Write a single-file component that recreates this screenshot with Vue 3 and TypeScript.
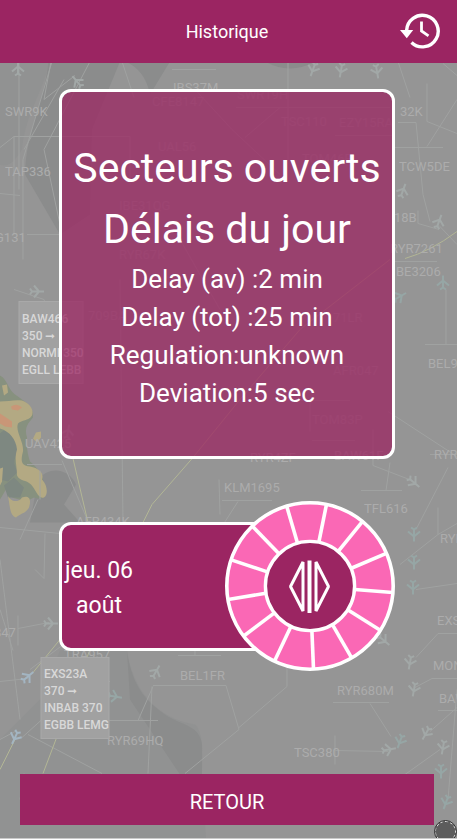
<script setup lang="ts">
interface Stat { label: string; value: string }
interface Tag { x: number; y: number; text: string; faint?: boolean }
interface Plane { x: number; y: number; turn: number; tone?: string }

const stats: Stat[] = [
  { label: 'Delay (av) :', value: '2 min' },
  { label: 'Delay (tot) :', value: '25 min' },
  { label: 'Regulation:', value: 'unknown' },
  { label: 'Deviation:', value: '5 sec' },
]

// Thirteen equal segments between the hub and the rim of the wheel
const spokes = Array.from({ length: 13 }, (_, i) => {
  const a = ((4.5 + (i * 360) / 13) * Math.PI) / 180
  return {
    x1: 85 + 45 * Math.cos(a),
    y1: 85 + 45 * Math.sin(a),
    x2: 85 + 83 * Math.cos(a),
    y2: 85 + 83 * Math.sin(a),
  }
})

const tags: Tag[] = [
  { x: 5, y: 116, text: 'SWR9K' },
  { x: 5, y: 176, text: 'TAP336' },
  { x: -5, y: 242, text: 'G131' },
  { x: 173, y: 92, text: 'IBS37M' },
  { x: 152, y: 106, text: 'CFE8147', faint: true },
  { x: 237, y: 99, text: 'SWR19H', faint: true },
  { x: 281, y: 126, text: 'TSC110', faint: true },
  { x: 339, y: 127, text: 'EZY15RA', faint: true },
  { x: 158, y: 151, text: 'UAL56', faint: true },
  { x: 302, y: 163, text: 'TOM46E', faint: true },
  { x: 119, y: 210, text: 'IBE31QG', faint: true },
  { x: 119, y: 259, text: 'RYR67K', faint: true },
  { x: 400, y: 116, text: '32K' },
  { x: 399, y: 171, text: 'TCW5DE' },
  { x: 394, y: 222, text: '18B' },
  { x: 390, y: 253, text: 'RYR7261' },
  { x: 396, y: 276, text: 'BE3206' },
  { x: 333, y: 322, text: '71LR', faint: true },
  { x: 88, y: 320, text: '709BA', faint: true },
  { x: 428, y: 368, text: 'BEL95' },
  { x: 333, y: 375, text: 'AFR047', faint: true },
  { x: 312, y: 424, text: 'TOM83P', faint: true },
  { x: 434, y: 459, text: 'RYR9' },
  { x: 250, y: 462, text: 'RYR4ZF' },
  { x: 334, y: 460, text: 'BAW61F' },
  { x: 25, y: 448, text: 'UAV425' },
  { x: 224, y: 492, text: 'KLM1695' },
  { x: 364, y: 513, text: 'TFL616' },
  { x: 76, y: 526, text: 'AFR434K' },
  { x: 440, y: 543, text: 'RYR' },
  { x: -6, y: 637, text: '847' },
  { x: 437, y: 625, text: 'EXS' },
  { x: 64, y: 659, text: 'TRA957' },
  { x: 180, y: 680, text: 'BEL1FR' },
  { x: 337, y: 695, text: 'RYR680M' },
  { x: 433, y: 670, text: 'MON' },
  { x: 439, y: 703, text: 'BAW' },
  { x: 107, y: 745, text: 'RYR69HQ' },
  { x: 294, y: 757, text: 'TSC380' },
]

const planes: Plane[] = [
  { x: 18, y: 69, turn: 0 },
  { x: 77, y: 82, turn: -40 },
  { x: 313, y: 70, turn: 200 },
  { x: 341, y: 71, turn: 190 },
  { x: 377, y: 72, turn: 170 },
  { x: 403, y: 191, turn: 20 },
  { x: 439, y: 222, turn: 20 },
  { x: 443, y: 283, turn: 0, tone: 'teal' },
  { x: 400, y: 297, turn: 60, tone: 'teal' },
  { x: 37, y: 292, turn: 90 },
  { x: 68, y: 432, turn: 10 },
  { x: 414, y: 483, turn: 130 },
  { x: 414, y: 535, turn: 180, tone: 'teal' },
  { x: 414, y: 563, turn: 180, tone: 'teal' },
  { x: 413, y: 588, turn: 180, tone: 'teal' },
  { x: 384, y: 641, turn: 130 },
  { x: 410, y: 663, turn: 190 },
  { x: 414, y: 690, turn: 190 },
  { x: 156, y: 672, turn: 30 },
  { x: 51, y: 624, turn: 90 },
  { x: 28, y: 677, turn: 50, tone: 'blue' },
  { x: 15, y: 738, turn: 205, tone: 'blue' },
  { x: 115, y: 697, turn: 100, tone: 'teal' },
  { x: 389, y: 750, turn: 80 },
  { x: 400, y: 742, turn: 200, tone: 'teal' },
  { x: 426, y: 734, turn: 210 },
  { x: 443, y: 748, turn: 190 },
  { x: 441, y: 772, turn: 180, tone: 'teal' },
  { x: 446, y: 803, turn: 200, tone: 'teal' },
]
</script>

<template>
  <div class="screen">
    <svg class="map" viewBox="0 0 457 839" preserveAspectRatio="xMidYMid slice" aria-hidden="true">
      <g class="land">
        <path d="M48 62C46 100 26 130 25 175L60 235L90 215L92 130L120 62Z" />
        <path d="M125 62Q145 70 150 95L170 62ZM265 62Q290 76 315 62Z" />
        <path class="pale" d="M0 62H48C46 90 26 110 22 150Q10 170 0 165Z" />
        <path class="pale" d="M60 651H127C133 690 155 718 195 725C205 735 202 760 202 775L206 839H0V740L40 700Z" />
        <path d="M127 651C132 690 150 705 168 717C184 726 200 727 202 745V775H180L130 700Z" />
        <path d="M38 480C50 465 70 470 76 485L64 505L80 523H30Z" />
      </g>
      <g class="storm">
        <path class="green" d="M0 376C8 380 8 392 18 397C24 402 34 406 33 418C28 424 24 428 27 438C26 446 28 456 30 462C38 468 44 478 46 492C46 500 40 500 34 498L26 502L12 498L6 490L0 500Z" />
        <path class="gray" d="M0 434Q8 426 14 434Q20 444 16 456Q12 464 18 472L8 482L0 480ZM4 486L14 478L24 488L20 498L8 498Z" />
        <path class="gold" d="M0 402C8 402 14 400 22 401C30 404 34 410 32 416C28 422 22 420 18 424C15 432 24 442 23 452C21 460 20 466 30 467C40 469 44 474 42 480C48 486 48 496 44 498C38 500 36 490 31 485C26 480 20 482 17 476C17 466 14 460 17 450C16 440 10 432 0 429ZM8 496C10 502 18 504 22 498C28 496 32 498 29 508C26 514 20 514 16 518C10 516 10 508 8 496Z" />
        <path class="gold" d="M36 433L41 432L41 438L37 443L33 439ZM2 386L7 385L8 393L4 396ZM0 469L3 468L2 482L0 486Z" />
        <path class="orange" d="M11 407Q17 403 22 408L18 411L12 410ZM0 414L12 422V428L5 427L0 424Z" />
      </g>
      <g class="routes">
        <path d="M19 62V190M52 62L23 160V260M64 80L24 150M75 76L44 100L51 62M90 62L44 150L60 225M0 148L14 137H130V185M14 137V235M0 194L20 196M27 235H60M122 62L134 98M172 70H216M195 90L232 130L280 175M288 62V160M236 108H390M280 108L245 138M335 136H395M398 62L410 98M427 84V122L457 134M427 147L457 100M398 123H416L423 195L430 222M393 148H443M443 64L457 76M418 211V224L439 230M394 262H437M439 226L457 245M446 290V345M425 345H457M14 290L44 300L60 350M27 465H62M40 471V500M62 461L88 522M120 280L123 522M180 240L220 310M310 400V432M290 401H350M373 430V466L412 481M312 441H355M388 412L457 457M390 463L386 491M361 491H402M219 480L220 515M222 501H272M238 502L220 530M430 455H457M448 468L416 530M438 508V535M400 565L438 535L457 524M416 590L457 584M0 528L60 534M45 534L44 579L35 570M0 610L13 651M0 560L20 720M18 616V646M18 629L49 623M42 682H110M153 686H226L239 730L185 774M239 728L287 687V650M153 687L138 721H158M108 721H157M152 687L148 774M178 656H221M195 644V656M416 658L438 634H457M415 688L432 679H457M333 703H389M370 704L391 737M438 711H457M457 708L430 732M448 800L457 690M335 736V765M335 751L388 752M405 775L440 750M28 735L102 774M22 738L42 720M0 682L28 679M30 670L70 640M0 740L15 732M60 535L160 600M20 540L38 500M20 800L24 774" />
        <path class="yellow" d="M0 770L16 738M33 673L60 640M43 774L90 650M73 459L88 523M143 523L152 505L193 458L240 400L300 330L390 260M405 259Q430 252 457 232" />
      </g>
      <g class="planes">
        <g v-for="(p, i) in planes" :key="i" :class="p.tone" :transform="`translate(${p.x} ${p.y}) rotate(${p.turn})`">
          <path d="M0-7V6M0-2L-6 3M0-2L6 3M0 5L-3 7M0 5L3 7" />
        </g>
      </g>
      <g class="tags">
        <text v-for="(t, i) in tags" :key="i" :x="t.x" :y="t.y" :class="{ faint: t.faint }">{{ t.text }}</text>
      </g>
      <g class="plates">
        <rect x="19" y="302" width="64" height="82" />
        <text x="22" y="323">BAW466</text>
        <text x="22" y="340">350 ➞</text>
        <text x="22" y="357">NORMI 350</text>
        <text x="22" y="374">EGLL LEBB</text>
        <rect x="41" y="658" width="68" height="81" />
        <text x="44" y="678">EXS23A</text>
        <text x="44" y="695">370 ➞</text>
        <text x="44" y="712">INBAB 370</text>
        <text x="44" y="729">EGBB LEMG</text>
      </g>
    </svg>

    <header class="bar">
      <h1>Historique</h1>
      <button class="history" type="button" aria-label="Historique">
        <svg viewBox="0 2 42 42" fill="none">
          <path d="M8.600 21.500A15.800 15.800 0 1 1 13.500 33.500" stroke="#fff" stroke-width="3.400" />
          <path d="M2 21H15.200L8.800 29.200Z" fill="#fff" />
          <path d="M23.500 12.500V22L30.500 26.800" stroke="#fff" stroke-width="2.800" />
        </svg>
      </button>
    </header>

    <main class="content">
      <section class="card">
        <h2>Secteurs ouverts</h2>
        <h2>Délais du jour</h2>
        <p v-for="s in stats" :key="s.label">{{ s.label }}{{ s.value }}</p>
      </section>

      <section class="day">
        <div class="date-panel">
          <p>jeu. 06<br />août</p>
        </div>
        <svg class="wheel" viewBox="0 0 170 170" aria-hidden="true">
          <circle cx="85" cy="85" r="83.200" fill="#fa68b5" stroke="#fff" stroke-width="3.600" />
          <line v-for="(s, i) in spokes" :key="i" v-bind="s" stroke="#fff" stroke-width="3.600" />
          <circle cx="85" cy="85" r="44.600" fill="#9b2562" stroke="#fff" stroke-width="3.400" />
          <g fill="none" stroke="#fff" stroke-width="3">
            <path d="M78 61V110L65.500 85.500ZM91 61V110L103.500 85.500Z" stroke-linejoin="bevel" />
            <path d="M84.500 59.500V112" stroke-width="4" />
          </g>
        </svg>
      </section>

      <button class="back" type="button">RETOUR</button>
    </main>
    <span class="touch"></span>
  </div>
</template>

<style>
body {
  margin: 0;
}
</style>

<style scoped>
.screen {
  position: relative;
  box-sizing: border-box;
  display: flex;
  flex-direction: column;
  min-height: 100vh;
  overflow: hidden;
  border-bottom: 1px solid #c9c9c9;
  background: #959595;
  color: #fff;
  font-family: Roboto, "Liberation Sans", sans-serif;
}

.map {
  position: absolute;
  inset: 0;
  width: 100%;
  height: 100%;
}

.land {
  fill: #8b8c8c;
}

.land .pale {
  fill: #919292;
}

.storm .green {
  fill: #87917f;
}

.storm .gray {
  fill: #7e8881;
}

.storm .gold {
  fill: #b3a983;
}

.storm .orange {
  fill: #c99677;
}

.routes {
  fill: none;
  stroke: #a0a2a1;
  stroke-width: 1;
}

.routes .yellow {
  stroke: #b2b695;
}

.planes {
  fill: none;
  stroke: #a2a8a7;
  stroke-width: 2;
}

.planes .teal {
  stroke: #96a6a5;
}

.planes .blue {
  stroke: #a3b5c2;
}

.tags {
  fill: #acacac;
  font: 13px Roboto, "Liberation Sans", sans-serif;
}

.tags .faint {
  fill: #a2a2a2;
}

.plates rect {
  fill: #a1a1a1;
  stroke: #a9a9a9;
}

.plates text {
  fill: #d8d8d8;
  font: 500 12px Roboto, "Liberation Sans", sans-serif;
}

.bar {
  position: relative;
  display: grid;
  grid-template-columns: 1fr auto 1fr;
  align-items: center;
  height: 63px;
  padding: 0 17px 0 14px;
  background: #9b2562;
}

.bar h1 {
  grid-column: 2;
  margin: 0;
  font-size: 18px;
  font-weight: 400;
}

.history {
  justify-self: end;
  width: 42px;
  height: 42px;
  padding: 0;
  border: 0;
  background: none;
}

.history svg {
  display: block;
}

.content {
  position: relative;
  display: flex;
  flex: 1;
  flex-direction: column;
  padding: 26px 23px 13px 20px;
}

.card {
  margin: 0 39px;
  padding: 46px 0 44px;
  border: 3px solid #fff;
  border-radius: 12px;
  background: rgba(155, 37, 98, 0.75);
  background-clip: padding-box;
  text-align: center;
  white-space: nowrap;
}

.card h2 {
  margin: 0;
  font-size: 41px;
  font-weight: 400;
  line-height: 61px;
}

.card p {
  margin: 0;
  font-size: 26px;
  line-height: 38px;
}

.day {
  display: flex;
  align-items: center;
  margin: 42px 39px;
}

.date-panel {
  box-sizing: border-box;
  display: flex;
  flex: 1;
  align-items: center;
  height: 129px;
  margin-right: -60px;
  padding: 4px 3px 0;
  border: 3px solid #fff;
  border-radius: 12px;
  background: #9b2562;
}

.date-panel p {
  margin: 0;
  font-size: 23px;
  line-height: 35px;
  text-align: center;
}

.wheel {
  position: relative;
  flex: none;
  width: 170px;
  height: 170px;
}

.back {
  height: 51px;
  margin-top: auto;
  padding: 4px 0 0;
  border: 0;
  background: #9b2562;
  color: #fff;
  font: 20px Roboto, "Liberation Sans", sans-serif;
}

.touch {
  position: absolute;
  right: 1px;
  bottom: -4px;
  box-sizing: border-box;
  width: 21px;
  height: 21px;
  border: 1px dashed #ddd;
  border-radius: 50%;
  outline: 1px solid #333;
  background: #5c5c5c;
}
</style>
